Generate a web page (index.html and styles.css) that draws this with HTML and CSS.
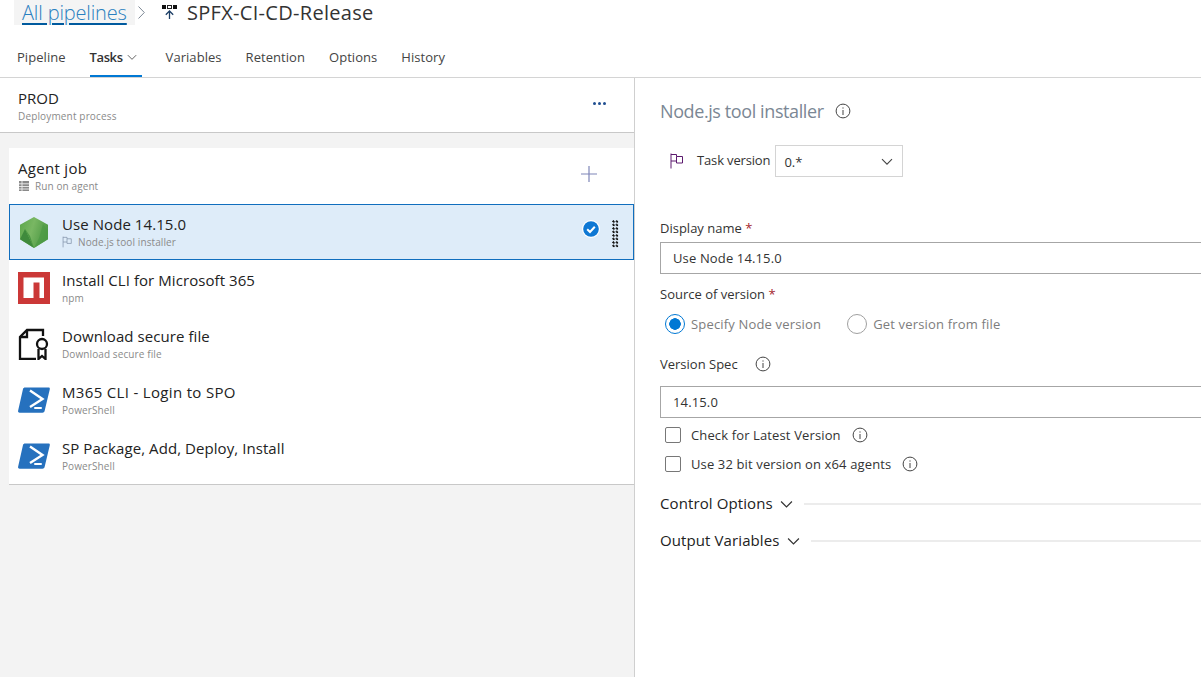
FILE: index.html
```html
<!DOCTYPE html>
<html lang="en">
<head>
<meta charset="utf-8">
<title>SPFX-CI-CD-Release</title>
<link rel="stylesheet" href="styles.css">
</head>
<body>
<svg class="defs" width="0" height="0" aria-hidden="true">
  <defs>
    <linearGradient id="nodeg" x1="0" y1="0" x2="1" y2="0.35">
      <stop offset="0" stop-color="#5aa64a"/>
      <stop offset="0.5" stop-color="#79b763"/>
      <stop offset="1" stop-color="#4f9a45"/>
    </linearGradient>
  </defs>
  <symbol id="info" viewBox="0 0 16 16"><circle cx="8" cy="8" r="6.9" fill="none" stroke="currentColor" stroke-width="1"/><rect x="7.5" y="7" width="1" height="5" fill="currentColor"/><rect x="7.5" y="4.4" width="1" height="1.2" fill="currentColor"/></symbol>
  <symbol id="chev" viewBox="0 0 12 8"><path d="M1 1.2 6 6.2 11 1.2" fill="none" stroke="currentColor" stroke-width="1.1"/></symbol>
  <symbol id="flag" viewBox="0 0 14 16"><path d="M1.500 0.500V15.500M1.500 1.500H7V3.500H13V10H7V8H1.500M7 3.500V8" fill="none" stroke="currentColor" stroke-width="1"/></symbol>
  <symbol id="ps" viewBox="0 0 32 26"><path d="M7 0.500H30.500C31.600 0.500 32 1.300 31.800 2.300L26.600 24C26.300 25.100 25.500 25.700 24.500 25.700H1.600C0.500 25.700 -0.200 24.900 0.100 23.800L5 2C5.300 1 6 0.500 7 0.500Z" fill="#2671be"/><path d="M12 3.500 24.500 12 12 20" fill="none" stroke="#fff" stroke-width="2.400"/><rect x="16" y="20" width="8" height="2" rx="1" fill="#fff"/></symbol>
</svg>

<header class="crumbs">
  <a class="crumb-link">All pipelines</a>
  <svg class="crumb-sep" viewBox="0 0 7 13"><path d="M0.500 0.500 6.300 6.500 0.500 12.500" fill="none" stroke="#7c8794" stroke-width="1"/></svg>
  <svg class="release-icon" viewBox="0 0 16 16" width="16" height="16"><rect x="0" y="1" width="4" height="4"/><rect x="5.500" y="1.500" width="4" height="3" fill="#fff" stroke="#222"/><rect x="11" y="1" width="4" height="4"/><path d="M7.500 15V7.500M3.800 10.800 7.500 7 11.200 10.800" fill="none" stroke="#1d3f66" stroke-width="1.300"/></svg>
  <h1 class="crumb-title">SPFX-CI-CD-Release</h1>
</header>

<nav class="tabs">
  <span class="tab">Pipeline</span>
  <span class="tab tab-active">Tasks <svg class="tab-chev"><use href="#chev"/></svg></span>
  <span class="tab">Variables</span>
  <span class="tab">Retention</span>
  <span class="tab">Options</span>
  <span class="tab">History</span>
</nav>

<main class="split">
  <section class="left">
    <div class="stage">
      <div>
        <div class="stage-name">PROD</div>
        <div class="sub sub-stage">Deployment process</div>
      </div>
      <div class="dots"><i></i><i></i><i></i></div>
    </div>
    <div class="job-list">
      <div class="job">
        <div class="job-text">
          <div class="job-name">Agent job</div>
          <div class="sub sub-icon">
            <svg class="mini" viewBox="0 0 12 12" width="12" height="12"><path d="M1 1h10v10H1z" fill="#8a8a8a"/><path d="M1 3.800h10M1 6.500h10M1 9h10M4 1v10" stroke="#eee" stroke-width="0.900"/></svg>
            Run on agent
          </div>
        </div>
        <svg class="plus" viewBox="0 0 16 16" width="16" height="16"><path d="M8 0V16M0 8H16" stroke="#7f86b8" stroke-width="1.200"/></svg>
      </div>

      <div class="task task-selected">
        <svg class="task-icon" viewBox="0 0 32 32" width="32" height="32">
          <path d="M16 1 30 8.700V23.300L16 32 2 23.300V8.700Z" fill="url(#nodeg)"/>
          <path d="M2 23.300 7 13 16 32Z" fill="#3f8a3c"/>
          <path d="M7 13 12 20 16 32Z" fill="#4a9642"/>
          <path d="M30 23.300V15L25 8 21 22 16 32Z" fill="#4b9a45" opacity="0.700"/>
        </svg>
        <div class="task-text">
          <div class="task-name">Use Node 14.15.0</div>
          <div class="sub sub-icon">
            <svg class="mini-flag"><use href="#flag"/></svg>
            Node.js tool installer
          </div>
        </div>
        <span class="check">
          <svg viewBox="0 0 18 18" width="18" height="18"><circle cx="9" cy="9" r="9" fill="#fff"/><circle cx="9" cy="9" r="7.800" fill="#0f78d4"/><path d="M5.200 9.300 8 12 12.800 6.800" fill="none" stroke="#fff" stroke-width="2"/></svg>
        </span>
        <span class="grip"></span>
      </div>

      <div class="task">
        <svg class="task-icon" viewBox="0 0 32 32" width="32" height="32"><rect width="32" height="32" fill="#cb3837"/><path d="M5.500 5.500H26V26H21.500V10.500H15.500V26H5.500Z" fill="#fff"/></svg>
        <div class="task-text">
          <div class="task-name">Install CLI for Microsoft 365</div>
          <div class="sub">npm</div>
        </div>
      </div>

      <div class="task">
        <svg class="task-icon" viewBox="0 0 32 32" width="32" height="32" fill="none" stroke="#111" stroke-width="2.300">
          <path d="M25 8V2H9L2 9V31H18"/><path d="M9 2V9H2"/><circle cx="24" cy="16" r="5"/><path d="M20.500 21V31L24 28 27.500 31V21"/>
        </svg>
        <div class="task-text">
          <div class="task-name">Download secure file</div>
          <div class="sub">Download secure file</div>
        </div>
      </div>

      <div class="task">
        <svg class="task-icon"><use href="#ps"/></svg>
        <div class="task-text">
          <div class="task-name task-name-wide">M365 CLI - Login to SPO</div>
          <div class="sub">PowerShell</div>
        </div>
      </div>

      <div class="task">
        <svg class="task-icon"><use href="#ps"/></svg>
        <div class="task-text">
          <div class="task-name">SP Package, Add, Deploy, Install</div>
          <div class="sub">PowerShell</div>
        </div>
      </div>
    </div>
  </section>

  <section class="right">
    <div class="panel-title">
      <h2>Node.js tool installer</h2>
      <svg class="info"><use href="#info"/></svg>
    </div>

    <div class="version-row">
      <svg class="version-flag"><use href="#flag"/></svg>
      <span class="version-label">Task version</span>
      <div class="select"><span>0.*</span><svg class="select-chev"><use href="#chev"/></svg></div>
    </div>

    <label class="field-label label-display">Display name <b>*</b></label>
    <div class="input">Use Node 14.15.0</div>

    <label class="field-label label-source">Source of version <b>*</b></label>
    <div class="radios">
      <span class="radio radio-on"></span><span class="radio-text">Specify Node version</span>
      <span class="radio radio-off"></span><span class="radio-text">Get version from file</span>
    </div>

    <label class="field-label label-spec">Version Spec <svg class="info"><use href="#info"/></svg></label>
    <div class="input input-spec">14.15.0</div>

    <div class="check-row check-first"><span class="box"></span><span>Check for Latest Version</span><svg class="info"><use href="#info"/></svg></div>
    <div class="check-row"><span class="box"></span><span>Use 32 bit version on x64 agents</span><svg class="info"><use href="#info"/></svg></div>

    <div class="group group-first"><span>Control Options</span><svg class="group-chev"><use href="#chev"/></svg><i></i></div>
    <div class="group"><span>Output Variables</span><svg class="group-chev"><use href="#chev"/></svg><i></i></div>
  </section>
</main>
</body>
</html>
```
FILE: styles.css
```css
* { box-sizing: border-box; }
html, body { margin: 0; height: 100%; overflow: hidden; }
body {
  width: 1201px;
  height: 677px;
  background: #fff;
  color: #333;
  font-family: "Open Sans", "Noto Sans", "Liberation Sans", sans-serif;
  font-size: 13px;
  display: flex;
  flex-direction: column;
}
.defs { position: absolute; }

.crumbs {
  height: 25px;
  padding-left: 14px;
  display: flex;
  align-items: center;
  flex: none;
}
.crumb-link {
  width: 121px;
  height: 25px;
  background: #f4f4f4;
  color: #2a80c0;
  font-size: 20px;
  font-weight: 300;
  letter-spacing: -0.15px;
  line-height: 25px;
  padding-left: 8px;
  text-decoration: underline;
  text-decoration-color: #005a9e;
  text-decoration-thickness: 2px;
  text-underline-offset: 3px;
  white-space: nowrap;
}
.crumb-sep { width: 7px; height: 13px; margin-left: 3px; margin-right: 17px; flex: none; }
.release-icon { fill: #111; flex: none; margin-right: 9px; margin-top: -1px; }
.crumb-title {
  margin: 0;
  font-size: 20px;
  font-weight: 400;
  letter-spacing: 0.3px;
  color: #333;
  white-space: nowrap;
}

.tabs {
  height: 53px;
  flex: none;
  display: flex;
  padding: 0 0 0 17px;
  gap: 24px;
  border-bottom: 1px solid #d4d4d4;
}
.tab {
  height: 52px;
  padding-top: 23px;
  line-height: 18px;
  font-size: 13px;
  letter-spacing: 0.05px;
  color: #444;
  white-space: nowrap;
}
.tab-active {
  font-weight: 600;
  letter-spacing: -0.4px;
  border-bottom: 2px solid #0078d4;
  color: #333;
  width: 52px;
}
.tab-chev { width: 10px; height: 7px; color: #555; margin-left: 1px; vertical-align: 1px; }

.split { flex: 1; display: flex; min-height: 0; }
.left {
  width: 635px;
  flex: none;
  background: #f3f3f3;
  border-right: 1px solid #cfcfcf;
}
.stage {
  height: 55px;
  background: #fff;
  border-bottom: 1px solid #c8c8c8;
  padding: 11px 28px 0 18px;
  display: flex;
  justify-content: space-between;
}
.stage-name { font-size: 15px; line-height: 18px; margin-bottom: 2px; color: #222; }
.sub {
  font-size: 10px;
  line-height: 14px;
  color: #8a8a8a;
  letter-spacing: 0.1px;
  white-space: nowrap;
}
.sub-stage { letter-spacing: 0.15px; }
.sub-icon { display: flex; align-items: center; gap: 5px; }
.mini { flex: none; }
.mini-flag { width: 10px; height: 12px; color: #7f8fa8; flex: none; margin-right: 1px; }
.dots { display: flex; gap: 2px; padding-top: 13px; }
.dots i { width: 3px; height: 3px; border-radius: 50%; background: #1f4e90; }

.job-list {
  margin: 15px 0 0 9px;
  background: #fff;
  border-bottom: 1px solid #c8c8c8;
}
.job {
  height: 56px;
  padding: 10px 37px 0 9px;
  display: flex;
  justify-content: space-between;
}
.job-name { font-size: 15px; line-height: 21px; color: #222; letter-spacing: 0.3px; }
.plus { margin-top: 8px; }

.task {
  height: 56px;
  display: flex;
  align-items: center;
  padding: 0 9px;
  position: relative;
}
.task-selected {
  background: #deecf9;
  outline: 1px solid #106ebe;
  outline-offset: -1px;
}
.task-icon { width: 32px; height: 32px; flex: none; }
.task-text { margin-left: 12px; flex: 1; }
.task-name { font-size: 15px; line-height: 18px; margin-bottom: 2px; margin-top: -1px; color: #222; letter-spacing: 0.07px; white-space: nowrap; }
.task-name-wide { letter-spacing: 0.33px; }
.check { width: 18px; height: 18px; margin-right: 12px; flex: none; margin-top: -7px; }
.check svg { display: block; }
.grip {
  width: 7px;
  height: 28px;
  flex: none;
  margin-right: 6px;
  margin-top: 3px;
  background-image: radial-gradient(circle at 1.5px 1.5px, #111 1.1px, transparent 1.2px);
  background-size: 3.500px 3.500px;
}

.right { flex: 1; min-width: 0; padding-left: 25px; overflow: hidden; }
.panel-title { display: flex; align-items: center; height: 24px; margin-top: 21px; }
.panel-title h2 {
  margin: 0;
  font-size: 18px;
  font-weight: 400;
  color: #7b8794;
  letter-spacing: -0.4px;
  white-space: nowrap;
}
.info { width: 16px; height: 16px; color: #444; flex: none; }
.panel-title .info { margin-left: 11px; }
.version-row { display: flex; align-items: center; margin-top: 22px; height: 32px; padding-left: 9px; }
.version-flag { width: 15px; height: 16px; color: #5c1a6e; flex: none; }
.version-label { margin-left: 13px; margin-top: -2px; font-size: 13px; letter-spacing: -0.15px; white-space: nowrap; }
.select {
  margin-left: 5px;
  width: 128px;
  height: 32px;
  border: 1px solid #d4d4d4;
  display: flex;
  align-items: center;
  justify-content: space-between;
  padding: 1px 9px 0 8px;
  color: #333;
}
.select-chev { width: 12px; height: 8px; color: #444; }
.field-label { display: block; font-size: 13px; line-height: 18px; letter-spacing: 0; color: #333; }
.field-label b { color: #a4262c; font-weight: 400; }
.label-display { margin-top: 42px; }
.input {
  height: 32px;
  margin-top: 5px;
  width: 100%;
  border: 1px solid #a6a6a6;
  border-right: 0;
  padding-left: 12px;
  line-height: 30px;
  font-size: 13px;
  letter-spacing: 0.14px;
}
.label-source { margin-top: 11px; }
.radios { display: flex; align-items: center; height: 20px; margin-top: 11px; padding-left: 5px; color: #7d7d7d; }
.radio { width: 20px; height: 20px; border-radius: 50%; flex: none; border: 1px solid #a0a0a0; background: #fff; }
.radio-on { border-color: #0078d4; background: radial-gradient(circle, #0078d4 0 5.500px, #fff 6px); }
.radio-text { margin-left: 6px; letter-spacing: 0.17px; white-space: nowrap; }
.radio-off { margin-left: 26px; }
.label-spec { margin-top: 21px; display: flex; align-items: center; gap: 17px; }
.input-spec { margin-top: 13px; }
.check-row { display: flex; align-items: center; height: 20px; margin-top: 9px; padding-left: 5px; letter-spacing: 0.13px; white-space: nowrap; }
.check-first { margin-top: 7px; }
.check-row .box { width: 16px; height: 16px; border: 1px solid #777; border-radius: 2px; margin-right: 10px; flex: none; }
.check-row .info { margin-left: 11px; }
.group { display: flex; align-items: center; height: 22px; white-space: nowrap; font-size: 15px; letter-spacing: 0.1px; color: #222; margin-top: 15px; }
.group span { margin-top: -2px; }
.group-first { margin-top: 19px; }
.group-chev { width: 13px; height: 9px; color: #333; margin-left: 7px; flex: none; }
.group i { flex: 1; height: 2px; background: #ececec; margin-left: 11px; }
```
